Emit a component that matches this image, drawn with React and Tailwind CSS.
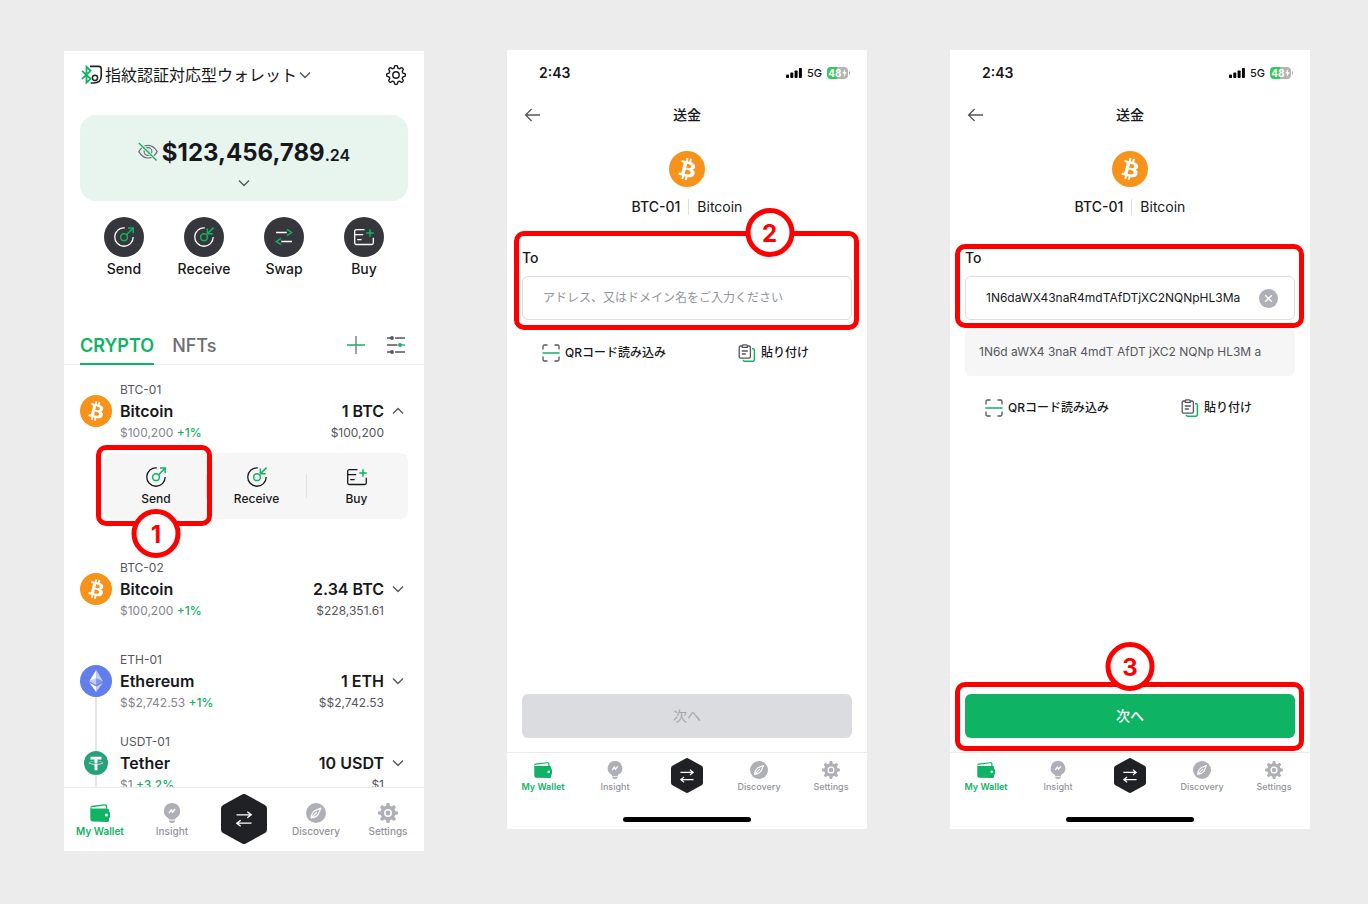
import { useState } from 'react';

const GREEN = '#0fb364';

// Builds an eight-toothed cog outline around the centre of a 20x20 box
const cogPath = (radius, depth, sharpness) => {
    const points = [];
    for (let i = 0; i < 192; i++) {
        const angle = (i / 192) * Math.PI * 2;
        const r = radius + depth * Math.tanh(sharpness * Math.cos(8 * angle));
        points.push(`${(10 + r * Math.sin(angle)).toFixed(2)} ${(10 - r * Math.cos(angle)).toFixed(2)}`);
    }
    return `M${points.join('L')}Z`;
};

const Line = ({ className = 'size-5', children, ...props }) => (
    <svg viewBox="0 0 20 20" fill="none" stroke="currentColor" strokeWidth="1.3" className={className} aria-hidden="true" {...props}>
        {children}
    </svg>
);

const SendIcon = () => (
    <Line>
        <path d="M10.8 .9A9.2 9.2 0 1 0 19.2 10" />
        <circle cx="10" cy="10.2" r="3.4" stroke={GREEN} strokeWidth="1.5" />
        <path d="M12.5 7.7L19 1.2M14 1H19.2V6.2" stroke={GREEN} strokeWidth="1.5" />
    </Line>
);

const ReceiveIcon = () => (
    <Line>
        <path d="M10.8 .9A9.2 9.2 0 1 0 19.2 10" />
        <circle cx="10" cy="10.2" r="3.4" stroke={GREEN} strokeWidth="1.5" />
        <path d="M19.6 .6L13.6 6.6M13.4 1.6V6.8H18.8" stroke={GREEN} strokeWidth="1.5" />
    </Line>
);

const SwapIcon = () => (
    <Line>
        <path d="M2 5.5H12.8M18 14.5H7.2" strokeWidth="1.5" />
        <path d="M13 2.4L17.6 5.5L13 8.6M7 11.4L2.4 14.5L7 17.6" stroke={GREEN} strokeWidth="1.5" />
    </Line>
);

const BuyIcon = () => (
    <Line>
        <path d="M10.5 2.7H2.2A1.5 1.5 0 0 0 .7 4.2V16A1.5 1.5 0 0 0 2.2 17.5H17.8A1.5 1.5 0 0 0 19.3 16V10.8M.7 7.6H9.2M3.2 12.6H7.6" />
        <path d="M16 2.2V9.8M12.2 6H19.8" stroke={GREEN} strokeWidth="1.5" />
    </Line>
);

const Chevron = ({ up, className = 'size-4 text-[#55565e]' }) => (
    <svg viewBox="0 0 16 16" fill="none" stroke="currentColor" strokeWidth="1.4" className={className} aria-hidden="true">
        <path d={up ? 'M3 10.6L8 5.6L13 10.6' : 'M3 5.4L8 10.4L13 5.4'} />
    </svg>
);

const Bitcoin = ({ className }) => (
    <svg viewBox="0 0 32 32" className={className} aria-hidden="true">
        <circle cx="16" cy="16" r="16" fill="#f7931a" />
        <path fill="#fff" d="M23.189 14.02c.314-2.096-1.283-3.223-3.465-3.975l.708-2.84-1.728-.43-.69 2.765c-.454-.114-.92-.22-1.385-.326l.695-2.783L15.596 6l-.708 2.839c-.376-.086-.746-.17-1.104-.26l.002-.009-2.384-.595-.46 1.846s1.283.294 1.256.312c.7.175.826.638.805 1.006l-.806 3.235c.048.012.11.03.18.057l-.183-.045-1.13 4.532c-.086.212-.303.531-.793.41.018.025-1.256-.313-1.256-.313l-.858 1.978 2.25.561c.418.105.828.215 1.231.318l-.715 2.872 1.727.43.708-2.84c.472.127.93.245 1.378.357l-.706 2.828 1.728.43.715-2.866c2.948.558 5.164.333 6.097-2.333.752-2.146-.037-3.385-1.588-4.192 1.13-.26 1.98-1.003 2.207-2.538zm-3.95 5.538c-.533 2.147-4.148.986-5.32.695l.95-3.805c1.172.293 4.929.872 4.37 3.11zm.535-5.569c-.487 1.953-3.495.96-4.47.717l.86-3.45c.975.243 4.118.696 3.61 2.733z" />
    </svg>
);

const Ethereum = ({ className }) => (
    <svg viewBox="0 0 32 32" className={className} aria-hidden="true">
        <circle cx="16" cy="16" r="16" fill="#627eea" />
        <g fill="#fff" transform="translate(1 1.3) scale(.92)">
            <path fillOpacity=".6" d="M16.498 4v8.87l7.497 3.35z" />
            <path d="M16.498 4L9 16.22l7.498-3.35z" />
            <path fillOpacity=".6" d="M16.498 21.968v6.027L24 17.616z" />
            <path d="M16.498 27.995v-6.028L9 17.616z" />
            <path fillOpacity=".2" d="M16.498 20.573l7.497-4.353-7.497-3.348z" />
            <path fillOpacity=".6" d="M9 16.22l7.498 4.353v-7.701z" />
        </g>
    </svg>
);

const Tether = ({ className }) => (
    <svg viewBox="0 0 32 32" className={className} aria-hidden="true">
        <circle cx="16" cy="16" r="16" fill="#26a17b" />
        <path fill="#fff" d="M17.922 17.383v-.002c-.11.008-.677.042-1.942.042-1.01 0-1.721-.03-1.971-.042v.003c-3.888-.171-6.79-.848-6.79-1.658 0-.809 2.902-1.486 6.79-1.66v2.644c.254.018.982.061 1.988.061 1.207 0 1.812-.05 1.925-.06v-2.643c3.88.173 6.775.85 6.775 1.658 0 .81-2.895 1.485-6.775 1.657m0-3.59v-2.366h5.414V7.819H8.595v3.608h5.414v2.365c-4.4.202-7.709 1.074-7.709 2.118 0 1.044 3.309 1.915 7.709 2.118v7.582h3.913v-7.584c4.393-.202 7.694-1.073 7.694-2.116 0-1.043-3.301-1.914-7.694-2.117" />
    </svg>
);

const WalletTab = ({ className }) => (
    <svg viewBox="0 0 20 20" className={className} aria-hidden="true">
        <path d="M1 4.3Q1.2 3.6 2 3.5L14.6 1.9Q16.4 1.7 16.5 3.1L16.6 5.6" fill="none" stroke="currentColor" strokeWidth="1.3" />
        <path fill="currentColor" d="M.3 3.8Q.6 5.5 2 5.6H17.4Q19 5.6 19 7.2V17.2Q19 18.9 17.4 18.9L2.4 18.5Q.3 18.4 .3 16.3Z" />
        <path fill="currentColor" d="M15.5 9H19Q20 9 20 10V14Q20 15 19 15H15.5Z" />
        <circle cx="16.4" cy="12" r="1.5" fill="#fff" />
    </svg>
);

const InsightTab = ({ className }) => (
    <svg viewBox="0 0 20 20" className={className} aria-hidden="true">
        <path fill="currentColor" d="M10 0A8 8 0 0 0 5.7 14.8Q6.8 15.6 7 16.6H13Q13.2 15.6 14.3 14.8A8 8 0 0 0 10 0ZM6.8 17.6H13.2V18.3Q13 19.9 10 19.9T6.8 18.3Z" />
        <path d="M6.9 10.2L9.3 6.9L10.6 9L13.1 5.9" fill="none" stroke="#fff" strokeWidth="1.4" />
    </svg>
);

const DiscoveryTab = ({ className }) => (
    <svg viewBox="0 0 20 20" className={className} aria-hidden="true">
        <circle cx="10" cy="10" r="10" fill="currentColor" />
        <path d="M14.9 5.1L8.4 7.9Q5.4 10.3 5.1 14.9Q9.7 14.6 12.1 11.6ZM11 9L5.4 14.6" fill="none" stroke="#fff" strokeWidth="1.2" strokeLinejoin="round" />
    </svg>
);

const SettingsTab = ({ className }) => (
    <svg viewBox="0 0 20 20" className={className} aria-hidden="true">
        <path d={cogPath(8.7, 1.3, 3)} fill="currentColor" />
        <circle cx="10" cy="10" r="3.2" fill="none" stroke="#fff" strokeWidth="1.5" />
    </svg>
);

const Hexagon = ({ className }) => (
    <svg viewBox="0 0 46 50" className={className} aria-hidden="true">
        <path d="M23 4L42 14.5V35.5L23 46L4 35.5V14.5Z" fill="#202125" stroke="#202125" strokeWidth="8" strokeLinejoin="round" />
    </svg>
);

const HexagonArrows = ({ className }) => (
    <svg viewBox="0 0 16 16" fill="none" stroke="#fff" strokeWidth="1.3" className={className} aria-hidden="true">
        <path d="M.5 3.8H15M11.3 .8L15.2 3.8L11.3 6.8M15.5 12.2H1M4.7 9.2L.8 12.2L4.7 15.2" />
    </svg>
);

// Numbered marker that sits on the edge of a highlight frame
const Step = ({ number, className }) => (
    <span className={`absolute z-20 flex size-[49px] items-center justify-center rounded-full border-5 border-[#ff0000] bg-white pt-0.5 text-2xl font-bold text-[#ff0000] ${className}`}>
        {number}
    </span>
);

const Frame = ({ className }) => (
    <span className={`pointer-events-none absolute z-10 rounded-[10px] border-5 border-[#ff0000] ${className}`} />
);

const navItems = [
    { label: 'My Wallet', Icon: WalletTab, active: true },
    { label: 'Insight', Icon: InsightTab },
    { label: 'Swap', Icon: null },
    { label: 'Discovery', Icon: DiscoveryTab },
    { label: 'Settings', Icon: SettingsTab },
];

const BottomNav = ({ compact }) => (
    <nav className={`grid grid-cols-5 border-t border-[#ebebeb] bg-white ${compact ? 'h-12' : 'h-16'}`}>
        {navItems.map(({ label, Icon, active }) =>
            Icon ? (
                <a
                    key={label}
                    href="#"
                    className={`flex flex-col items-center gap-0.5 leading-3 ${compact ? 'pt-2 text-[9px]' : 'pt-[15px] text-[10px]'} ${active ? 'font-semibold text-[#0fb364]' : 'font-medium text-[#93949b]'}`}
                >
                    <Icon className={`${compact ? 'size-[18px]' : 'size-5'} ${active ? '' : 'text-[#afb0b7]'}`} />
                    {label}
                </a>
            ) : (
                <a key={label} href="#" aria-label={label} className={`flex justify-center ${compact ? 'pt-[5px]' : 'pt-[6px]'}`}>
                    <span className="grid h-fit place-items-center *:col-start-1 *:row-start-1">
                        <Hexagon className={compact ? 'h-[35px] w-8' : 'h-[50px] w-[46px]'} />
                        <HexagonArrows className={compact ? 'size-3.5' : 'size-4'} />
                    </span>
                </a>
            )
        )}
    </nav>
);

const actions = [
    { label: 'Send', Icon: SendIcon },
    { label: 'Receive', Icon: ReceiveIcon },
    { label: 'Swap', Icon: SwapIcon },
    { label: 'Buy', Icon: BuyIcon },
];

const AssetRow = ({ tag, name, price, change, amount, value, open, icon }) => (
    <div className="flex h-16 items-center">
        <div className="mb-0.5 flex w-8 shrink-0 justify-center">{icon}</div>
        <div className="ml-2 flex-1">
            <p className="text-xs leading-5 text-[#55565e]">{tag}</p>
            <p className="text-base leading-[22px] font-semibold">{name}</p>
            <p className="text-xs leading-[22px] text-[#84858d]">
                {price} <span className="font-medium text-[#0fb364]">{change}</span>
            </p>
        </div>
        <div className="pt-5 text-right">
            <p className="text-base leading-[22px] font-semibold">{amount}</p>
            <p className="text-xs leading-[22px] text-[#55565e]">{value}</p>
        </div>
        <button type="button" aria-label={`${tag} details`} className="mr-0.5 mb-0.5 ml-1.5 flex w-4 justify-center">
            <Chevron up={open} />
        </button>
    </div>
);

const WalletScreen = () => {
    const [tab, setTab] = useState('CRYPTO');

    return (
        <section className="mt-px bg-white">
            <header className="flex h-12 items-center px-4">
                <svg viewBox="0 0 22 20" fill="none" className="ml-px h-5 w-[22px]" aria-hidden="true">
                    <path d="M9 1.4H17.6Q20.2 1.4 20.2 4V11Q20.2 18 12.4 18H9.8" stroke="#202125" strokeWidth="1.6" />
                    <circle cx="14" cy="12.8" r="2.6" stroke="#202125" strokeWidth="1.5" />
                    <path d="M1 5.8L9.6 13.8L5.5 17.6V1.8L9.6 5.8L1 13.8" stroke={GREEN} strokeWidth="1.8" />
                </svg>
                <h1 className="ml-0.5 text-base">指紋認証対応型ウォレット</h1>
                <Chevron className="size-4 text-[#55565e]" />
                <button type="button" aria-label="Settings" className="ml-auto pr-[2px]">
                    <Line>
                        <path d={cogPath(8.2, 1.2, 2.2)} strokeWidth="1.4" strokeLinejoin="round" />
                        <circle cx="10" cy="10" r="3.2" strokeWidth="1.4" />
                    </Line>
                </button>
            </header>

            <div className="mx-4 mt-4 flex h-[86px] flex-col items-center rounded-2xl bg-[#e7f5ee] pt-[22px]">
                <div className="flex items-center">
                    <Line className="mb-0.5 size-5 text-[#6c6d75]">
                        <path d="M.8 9.6Q4.6 3.4 10 3.4T19.2 9.6Q15.4 16 10 16T.8 9.6Z" strokeWidth="1.2" />
                        <circle cx="10" cy="9.6" r="3.9" strokeWidth="1.2" />
                        <circle cx="10" cy="9.6" r="1.2" strokeWidth="1" />
                        <path d="M.9 1L18.6 18.4" stroke="#e7f5ee" strokeWidth="3" />
                        <path d="M.9 1L18.6 18.4" stroke={GREEN} strokeWidth="1.4" />
                    </Line>
                    <p className="ml-1 text-2xl font-bold">
                        $123,456,789<span className="text-base font-semibold">.24</span>
                    </p>
                </div>
                <button type="button" aria-label="Show breakdown" className="mt-1.5">
                    <Chevron />
                </button>
            </div>

            <div className="mt-4 grid grid-cols-4 px-5">
                {actions.map(({ label, Icon }) => (
                    <button key={label} type="button" className="flex flex-col items-center gap-[2px] text-sm font-medium">
                        <span className="flex size-10 items-center justify-center rounded-full bg-[#36373c] text-white">
                            <Icon />
                        </span>
                        {label}
                    </button>
                ))}
            </div>

            <div className="mt-[46px] flex h-10 items-stretch border-b border-[#efefef] px-4">
                {['CRYPTO', 'NFTs'].map(name => (
                    <button
                        key={name}
                        type="button"
                        onClick={() => setTab(name)}
                        className={`-mb-px mr-[18px] border-b-2 pt-[3px] text-lg ${tab === name ? 'border-[#0fb364] font-semibold text-[#0fb364]' : 'border-transparent font-medium text-[#6c6d75]'}`}
                    >
                        {name}
                    </button>
                ))}
                <button type="button" aria-label="Add" className="ml-auto">
                    <Line className="size-5 text-[#6c6d75]">
                        <path d="M10 1V19" />
                        <path d="M1 10H19" stroke={GREEN} strokeWidth="1.5" />
                    </Line>
                </button>
                <button type="button" aria-label="Filter" className="mr-0.5 ml-5">
                    <Line className="size-5 text-[#55565e]">
                        <path d="M1 3H6M9 3H19M1 10H11.5M1 17H6M9 17H19" />
                        <path d="M14 10H19" stroke={GREEN} />
                        <circle cx="6" cy="3" r="1.9" fill="currentColor" stroke="none" />
                        <circle cx="14" cy="10" r="1.9" fill={GREEN} stroke="none" />
                        <circle cx="6" cy="17" r="1.9" fill="currentColor" stroke="none" />
                    </Line>
                </button>
            </div>

            <div className="max-h-[422px] overflow-hidden px-4 pt-[15px]">
                <AssetRow tag="BTC-01" name="Bitcoin" price="$100,200" change="+1%" amount="1 BTC" value="$100,200" open icon={<Bitcoin className="size-8" />} />
                <div className="relative mt-[9px] ml-6 grid h-[66px] grid-cols-3 rounded-lg bg-[#f6f6f6] px-0.5">
                    {actions.filter(a => a.label !== 'Swap').map(({ label, Icon }, i) => (
                        <div key={label} className="relative flex items-center">
                            {i > 0 && <span className="h-6 w-px bg-[#e2e2e2]" />}
                            <button type="button" className="flex flex-1 flex-col items-center gap-1 pt-0.5 text-xs font-medium">
                                <Icon />
                                {label}
                            </button>
                            {i === 0 && (
                                <>
                                    <Frame className="-top-2 -right-[6px] -left-[10px] h-[81px]" />
                                    <Step number={1} className="top-14 left-1/2 -translate-x-1/2" />
                                </>
                            )}
                        </div>
                    ))}
                </div>
                <div className="mt-[39px]">
                    <AssetRow tag="BTC-02" name="Bitcoin" price="$100,200" change="+1%" amount="2.34 BTC" value="$228,351.61" icon={<Bitcoin className="size-8" />} />
                </div>
                <div className="relative mt-7 flex flex-col gap-[18px]">
                    {/* ties the token to the chain it lives on */}
                    <span className="absolute top-8 bottom-0 left-[15px] w-0.5 bg-[#e6e6e8]" />
                    <div className="relative">
                        <AssetRow tag="ETH-01" name="Ethereum" price="$$2,742.53" change="+1%" amount="1 ETH" value="$$2,742.53" icon={<Ethereum className="size-8" />} />
                    </div>
                    <div className="relative">
                        <AssetRow tag="USDT-01" name="Tether" price="$1" change="+3.2%" amount="10 USDT" value="$1" icon={<Tether className="size-6" />} />
                    </div>
                </div>
            </div>
            <BottomNav />
        </section>
    );
};

const StatusBar = () => (
    <div className="flex h-[46px] items-center pr-[17px] pl-8">
        <span className="text-sm font-semibold">2:43</span>
        <svg viewBox="0 0 16 10" className="ml-auto h-2.5 w-4" aria-hidden="true">
            <rect x="0" y="6.5" width="3" height="3.5" rx=".8" />
            <rect x="4.3" y="4.6" width="3" height="5.4" rx=".8" />
            <rect x="8.6" y="2.4" width="3" height="7.6" rx=".8" />
            <rect x="12.9" y="0" width="3" height="10" rx=".8" />
        </svg>
        <span className="ml-[5px] text-[11px] font-medium">5G</span>
        <span className="ml-[5px] flex h-3 w-[21px] items-center justify-center rounded-[4px] bg-linear-to-r from-[#35c759] from-48% to-[#b4b4b4] to-48% text-[10px] font-bold text-white">
            48
            <svg viewBox="0 0 5 8" className="h-2 w-[5px]" fill="#fff" aria-hidden="true">
                <path d="M3.2 0L.2 4.6H2.2L1.6 8L4.8 3.2H2.8Z" />
            </svg>
        </span>
        <span className="ml-px h-1 w-px rounded-r bg-[#b4b4b4]" />
    </div>
);

const ScanIcon = () => (
    <svg viewBox="0 0 18 18" fill="none" stroke="#55565e" strokeWidth="1.3" className="size-[18px]" aria-hidden="true">
        <path d="M1 5.5V2.5Q1 1 2.5 1H5.5M12.5 1H15.5Q17 1 17 2.5V5.5M17 12.5V15.5Q17 17 15.5 17H12.5M5.5 17H2.5Q1 17 1 15.5V12.5" />
        <path d="M.4 9H17.6" stroke={GREEN} strokeWidth="1.5" />
    </svg>
);

const PasteIcon = () => (
    <svg viewBox="0 0 18 18" fill="none" stroke="#55565e" strokeWidth="1.3" className="size-[18px]" aria-hidden="true">
        <path d="M4.3 2H2.6Q1.2 2 1.2 3.4V12.8Q1.2 14.2 2.6 14.2H11Q12.4 14.2 12.4 12.8V3.4Q12.4 2 11 2H9.3M4.3 3.4V1.9Q4.3 .8 5.4 .8H8.2Q9.3 .8 9.3 1.9V3.4ZM3.8 7H9.8M3.8 10H7.8" />
        <path d="M14 4.8H15Q16.4 4.8 16.4 6.2V15.8Q16.4 17.2 15 17.2H6.6Q5.2 17.2 5.2 15.8" stroke={GREEN} strokeWidth="1.5" />
    </svg>
);

const SendScreen = ({ step, address }) => {
    const [value, setValue] = useState(address || '');
    const id = `to-${step}`;

    return (
        <section className="flex min-h-[779px] flex-col bg-white">
            <StatusBar />
            <header className="grid h-[38px] grid-cols-3 items-center px-[17px]">
                <button type="button" aria-label="Back" className="w-[18px]">
                    <svg viewBox="0 0 18 18" fill="none" stroke="#55565e" strokeWidth="1.3" className="size-[18px]" aria-hidden="true">
                        <path d="M16 9H2M7.6 3L1.6 9L7.6 15" />
                    </svg>
                </button>
                <h2 className="text-center text-sm font-medium">送金</h2>
            </header>
            <Bitcoin className="mx-auto mt-[17px] size-9" />
            <div className="mt-2.5 flex items-center justify-center text-sm">
                <span className="font-medium">BTC-01</span>
                <span className="mx-2 h-4 w-px bg-[#dedede]" />
                <span>Bitcoin</span>
            </div>

            <div className="mt-[31px] px-[15px]">
                <div className="relative">
                    <Frame className={address ? '-top-1 -right-[9px] -bottom-2 -left-[10px]' : '-top-[17px] -right-[7px] -bottom-[10px] -left-2'} />
                    {!address && <Step number={step} className="-top-10 left-3/4 -translate-x-1/2" />}
                    <label htmlFor={id} className="block text-sm font-medium">To</label>
                    <div className="mt-2 flex h-11 items-center rounded-md border border-[#dcdde0] px-5">
                        <input
                            id={id}
                            type="text"
                            value={value}
                            onChange={e => setValue(e.target.value)}
                            placeholder="アドレス、又はドメイン名をご入力ください"
                            className="min-w-0 flex-1 text-xs outline-none placeholder:text-[#93949b]"
                        />
                        {value && (
                            <button type="button" aria-label="Clear" onClick={() => setValue('')} className="-mr-1">
                                <svg viewBox="0 0 19 19" className="size-[19px]" aria-hidden="true">
                                    <circle cx="9.5" cy="9.5" r="9.5" fill="#afb0b7" />
                                    <path d="M6.2 6.2L12.8 12.8M12.8 6.2L6.2 12.8" stroke="#fff" strokeWidth="1.5" />
                                </svg>
                            </button>
                        )}
                    </div>
                </div>
                {address && (
                    <p className="mt-2 flex h-12 items-center rounded-md bg-[#f6f6f6] px-3.5 text-xs text-[#55565e]">
                        {address.match(/.{1,4}/g).join(' ')}
                    </p>
                )}
                <div className={`flex justify-between pr-[43px] pl-5 text-xs leading-5 font-medium ${address ? 'mt-[22px]' : 'mt-[23px]'}`}>
                    <button type="button" className="flex items-center gap-[5px]">
                        <ScanIcon />
                        QRコード読み込み
                    </button>
                    <button type="button" className="flex items-center gap-[5px]">
                        <PasteIcon />
                        貼り付け
                    </button>
                </div>
            </div>

            <div className="relative mx-[15px] mt-auto mb-3.5">
                {address && (
                    <>
                        <Frame className="-top-3 -right-[9px] -bottom-[13px] -left-[10px]" />
                        <Step number={step} className="-top-[52px] left-1/2 -translate-x-1/2" />
                    </>
                )}
                <button
                    type="button"
                    disabled={!value}
                    className={`h-11 w-full rounded-md text-sm ${value ? 'bg-[#0fb364] font-medium text-white' : 'bg-[#dbdce0] text-[#a6a7ad]'}`}
                >
                    次へ
                </button>
            </div>
            <BottomNav compact />
            <div className="flex justify-center pt-[17px] pb-[7px]">
                <span className="h-[5px] w-32 rounded-full bg-black" />
            </div>
        </section>
    );
};

const App = () => (
    <main className="grid min-h-screen grid-cols-3 items-start gap-x-[83px] bg-[#ececec] pt-[50px] pr-[58px] pb-12 pl-16 font-['Inter','Noto_Sans_CJK_JP',sans-serif] text-[#17181b]">
        <WalletScreen />
        <SendScreen step={2} />
        <SendScreen step={3} address="1N6daWX43naR4mdTAfDTjXC2NQNpHL3Ma" />
    </main>
);

export default App;
